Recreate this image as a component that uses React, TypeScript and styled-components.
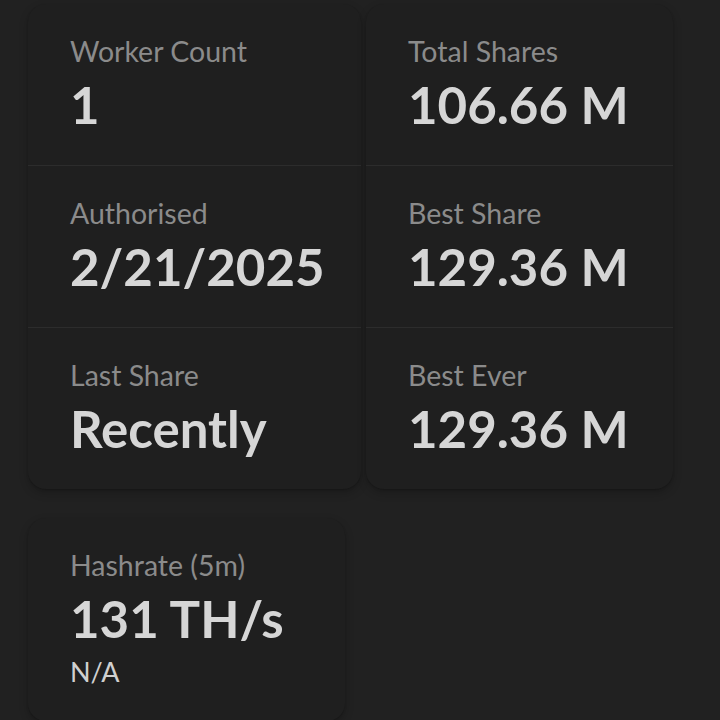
import { createGlobalStyle, styled } from "styled-components";

const Global = createGlobalStyle`
  html, body {
    margin: 0;
    padding: 0;
    background: #212121;
    font-family: Lato, "Noto Sans", sans-serif;
  }
`;

const Page = styled.div`
  display: grid;
  grid-template-columns: 333px 307px;
  column-gap: 5px;
  row-gap: 29px;
  align-items: start;
  padding: 4px 28px 0;
`;

const Card = styled.div<{ $width?: number }>`
  display: flex;
  flex-direction: column;
  width: ${(p) => (p.$width ? `${p.$width}px` : "auto")};
  background: #1f1f1f;
  border-radius: 18px;
  box-shadow: 0 4px 10px rgba(0, 0, 0, 0.2), 0 1px 2px rgba(0, 0, 0, 0.18);
  overflow: hidden;
`;

const Stat = styled.div`
  display: flex;
  flex-direction: column;
  padding: 27px 20px 31px 42px;
  & + & {
    border-top: 1px solid #2c2c2c;
  }
`;

const Title = styled.div`
  font-size: 28.5px;
  line-height: 40px;
  color: #8b8b8b;
  white-space: nowrap;
`;

const Value = styled.div`
  margin-top: 5px;
  font-size: 51px;
  line-height: 58px;
  font-weight: 700;
  color: #d6d6d6;
  white-space: nowrap;
`;

const Desc = styled.div`
  margin-top: 6px;
  font-size: 27px;
  line-height: 36px;
  color: #d0d0d0;
`;

type Item = { title: string; value: string; desc?: string };

const left: Item[] = [
  { title: "Worker Count", value: "1" },
  { title: "Authorised", value: "2/21/2025" },
  { title: "Last Share", value: "Recently" },
];

const right: Item[] = [
  { title: "Total Shares", value: "106.66 M" },
  { title: "Best Share", value: "129.36 M" },
  { title: "Best Ever", value: "129.36 M" },
];

const hashrate: Item[] = [{ title: "Hashrate (5m)", value: "131 TH/s", desc: "N/A" }];

function Stats({ items, width }: { items: Item[]; width?: number }) {
  return (
    <Card $width={width}>
      {items.map((s) => (
        <Stat key={s.title}>
          <Title>{s.title}</Title>
          <Value>{s.value}</Value>
          {s.desc ? <Desc>{s.desc}</Desc> : null}
        </Stat>
      ))}
    </Card>
  );
}

export default function App() {
  return (
    <>
      <Global />
      <Page>
        <Stats items={left} />
        <Stats items={right} />
        <Stats items={hashrate} width={317} />
      </Page>
    </>
  );
}
